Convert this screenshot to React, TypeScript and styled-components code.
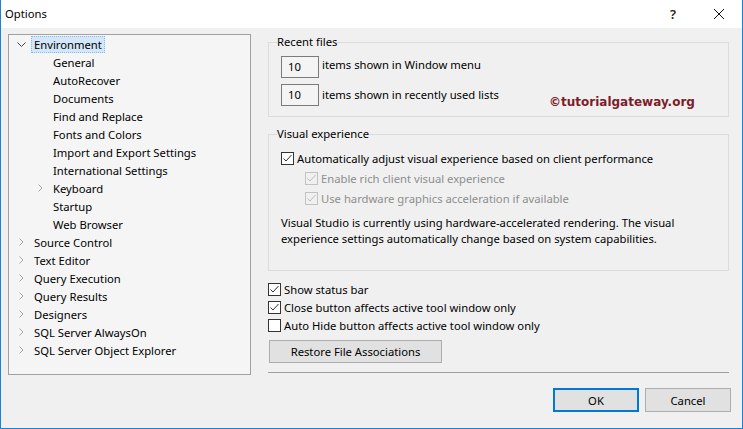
import React from 'react';
import styled, { createGlobalStyle, css } from 'styled-components';

const GlobalStyle = createGlobalStyle`
  html, body { margin: 0; padding: 0; background: #f0f0f0; }
  body {
    font-family: "Noto Sans", "Open Sans", sans-serif;
    font-size: 11.25px;
    color: #000;
  }
  * { box-sizing: border-box; }
`;

const Window = styled.div`
  width: 743px;
  height: 429px;
  border: 1px solid #1883d7;
  border-top: none;
  background: #f0f0f0;
  display: flex;
  flex-direction: column;
  overflow: hidden;
`;

const TitleBar = styled.div`
  height: 28px;
  flex: none;
  background: #fff;
  display: flex;
  align-items: center;
  padding-left: 4px;
`;

const Title = styled.div`
  flex: 1;
  line-height: 16px;
`;

const CaptionButton = styled.div`
  width: 46px;
  height: 28px;
  display: flex;
  align-items: center;
  justify-content: center;
  font-size: 13px;
  font-weight: 600;
  color: #222;
`;

const Main = styled.div`
  flex: 1;
  display: flex;
  gap: 17px;
  padding: 6px 13px 0 7px;
`;

const Tree = styled.div`
  width: 243px;
  height: 341px;
  flex: none;
  border: 1px solid #a0a0a0;
  background: #f5f5f5;
`;

const TreeRow = styled.div<{ $level: number }>`
  height: 18px;
  display: flex;
  align-items: center;
  padding-left: ${p => 6 + p.$level * 19}px;
  white-space: nowrap;
`;

const ChevronSlot = styled.span`
  width: 12px;
  height: 18px;
  flex: none;
  display: flex;
  align-items: center;
  justify-content: center;
`;

const TreeLabel = styled.span<{ $selected?: boolean }>`
  margin-left: 4px;
  padding: 0 2px;
  height: 17px;
  line-height: 15px;
  border: 1px solid transparent;
  ${p =>
    p.$selected &&
    css`
      background: #d3e7f8;
      border: 1px dotted #86b9ea;
    `}
`;

const Column = styled.div`
  width: 461px;
  flex: none;
  display: flex;
  flex-direction: column;
`;

const Group = styled.fieldset<{ $pt: number; $pb: number; $mt?: number }>`
  margin: ${p => p.$mt ?? 0}px 0 0 0;
  min-width: 0;
  border: 1px solid #dcdcdc;
  padding: ${p => p.$pt}px 8px ${p => p.$pb}px 12px;
`;

const Legend = styled.legend`
  padding: 0;
  margin-left: -4px;
  line-height: 16px;
`;

const FieldRows = styled.div`
  display: flex;
  flex-direction: column;
  gap: 6px;
`;

const FieldRow = styled.div`
  position: relative;
  height: 22px;
  display: flex;
  align-items: center;
  gap: 3px;
`;

const FieldLabel = styled.span<{ $shift?: number }>`
  line-height: 16px;
  margin-top: ${p => p.$shift ?? 0}px;
`;

const NumberBox = styled.div`
  width: 38px;
  height: 22px;
  border: 1px solid #7f7a7a;
  background: #f4f4f4;
  padding-left: 6px;
  line-height: 20px;
`;

const Watermark = styled.div`
  position: absolute;
  left: 268px;
  top: 10px;
  font-family: "DejaVu Sans", Verdana, sans-serif;
  font-weight: bold;
  font-size: 12px;
  line-height: 16px;
  color: #7e1c2a;
  white-space: nowrap;
`;

const CheckRow = styled.label<{ $h: number; $indent?: number; $disabled?: boolean }>`
  height: ${p => p.$h}px;
  display: flex;
  align-items: center;
  gap: 3px;
  padding-left: ${p => p.$indent ?? 0}px;
  white-space: nowrap;
  color: ${p => (p.$disabled ? '#8e8e8e' : '#000')};
`;

const Box = styled.span<{ $disabled?: boolean }>`
  width: 13px;
  height: 13px;
  flex: none;
  border: 1px solid ${p => (p.$disabled ? '#c2c2c2' : '#333')};
  background: ${p => (p.$disabled ? '#f0f0f0' : '#fff')};
  display: flex;
  align-items: center;
  justify-content: center;
`;

const Paragraph = styled.p`
  margin: 7px 0 0 0;
  line-height: 16px;
  width: 440px;
`;

const BottomChecks = styled.div`
  margin-top: 9px;
  display: flex;
  flex-direction: column;
`;

const Button = styled.button<{ $w: number; $h: number; $default?: boolean }>`
  width: ${p => p.$w}px;
  height: ${p => p.$h}px;
  background: #e1e1e1;
  border: ${p => (p.$default ? '2px solid #0078d7' : '1px solid #adadad')};
  font-family: inherit;
  font-size: 11.25px;
  color: #000;
  padding: 0;
`;

const RestoreButton = styled(Button)`
  margin: 6px 0 0 1px;
`;

const Separator = styled.div`
  margin-top: 9px;
  height: 1px;
  background: #a29e9e;
`;

const ButtonRow = styled.div`
  margin: 15px -2px 0 0;
  display: flex;
  justify-content: flex-end;
  gap: 6px;
`;

const ExpandedChevron = () => (
  <svg width="9" height="5" viewBox="0 0 9 5">
    <path d="M0.5 0.5 L4.5 4.5 L8.5 0.5" fill="none" stroke="#444" strokeWidth="1" />
  </svg>
);

const CollapsedChevron = () => (
  <svg width="5" height="8" viewBox="0 0 5 8">
    <path d="M0.5 0.5 L4 4 L0.5 7.5" fill="none" stroke="#a6a6a6" strokeWidth="1" />
  </svg>
);

const Check = ({ color }: { color: string }) => (
  <svg width="11" height="11" viewBox="0 0 11 11">
    <path d="M1.5 5.5 L4 8 L9.5 2" fill="none" stroke={color} strokeWidth="1" />
  </svg>
);

const CheckBox = ({ checked, disabled }: { checked: boolean; disabled?: boolean }) => (
  <Box $disabled={disabled}>{checked && <Check color={disabled ? '#bdbdbd' : '#333'} />}</Box>
);

type Node = { label: string; level: number; chevron?: 'open' | 'closed'; selected?: boolean };

const nodes: Node[] = [
  { label: 'Environment', level: 0, chevron: 'open', selected: true },
  { label: 'General', level: 1 },
  { label: 'AutoRecover', level: 1 },
  { label: 'Documents', level: 1 },
  { label: 'Find and Replace', level: 1 },
  { label: 'Fonts and Colors', level: 1 },
  { label: 'Import and Export Settings', level: 1 },
  { label: 'International Settings', level: 1 },
  { label: 'Keyboard', level: 1, chevron: 'closed' },
  { label: 'Startup', level: 1 },
  { label: 'Web Browser', level: 1 },
  { label: 'Source Control', level: 0, chevron: 'closed' },
  { label: 'Text Editor', level: 0, chevron: 'closed' },
  { label: 'Query Execution', level: 0, chevron: 'closed' },
  { label: 'Query Results', level: 0, chevron: 'closed' },
  { label: 'Designers', level: 0, chevron: 'closed' },
  { label: 'SQL Server AlwaysOn', level: 0, chevron: 'closed' },
  { label: 'SQL Server Object Explorer', level: 0, chevron: 'closed' },
];

export default function App() {
  return (
    <>
      <GlobalStyle />
      <Window>
        <TitleBar>
          <Title>Options</Title>
          <CaptionButton>?</CaptionButton>
          <CaptionButton>
            <svg width="10" height="10" viewBox="0 0 10 10">
              <path d="M0 0 L10 10 M10 0 L0 10" stroke="#111" strokeWidth="1" />
            </svg>
          </CaptionButton>
        </TitleBar>
        <Main>
          <Tree>
            {nodes.map(n => (
              <TreeRow key={n.label} $level={n.level}>
                <ChevronSlot>
                  {n.chevron === 'open' && <ExpandedChevron />}
                  {n.chevron === 'closed' && <CollapsedChevron />}
                </ChevronSlot>
                <TreeLabel $selected={n.selected}>{n.label}</TreeLabel>
              </TreeRow>
            ))}
          </Tree>
          <Column>
            <Group $pt={6} $pb={10}>
              <Legend>Recent files</Legend>
              <FieldRows>
                <FieldRow>
                  <NumberBox>10</NumberBox>
                  <FieldLabel $shift={-4}>items shown in Window menu</FieldLabel>
                </FieldRow>
                <FieldRow>
                  <NumberBox>10</NumberBox>
                  <FieldLabel $shift={-1}>items shown in recently used lists</FieldLabel>
                  <Watermark>©tutorialgateway.org</Watermark>
                </FieldRow>
              </FieldRows>
            </Group>
            <Group $pt={6} $pb={23} $mt={9}>
              <Legend>Visual experience</Legend>
              <CheckRow $h={20}>
                <CheckBox checked />
                Automatically adjust visual experience based on client performance
              </CheckRow>
              <CheckRow $h={20} $indent={24} $disabled>
                <CheckBox checked disabled />
                Enable rich client visual experience
              </CheckRow>
              <CheckRow $h={20} $indent={24} $disabled>
                <CheckBox checked disabled />
                Use hardware graphics acceleration if available
              </CheckRow>
              <Paragraph>
                Visual Studio is currently using hardware-accelerated rendering. The visual experience
                settings automatically change based on system capabilities.
              </Paragraph>
            </Group>
            <BottomChecks>
              <CheckRow $h={18}>
                <CheckBox checked />
                Show status bar
              </CheckRow>
              <CheckRow $h={18}>
                <CheckBox checked />
                Close button affects active tool window only
              </CheckRow>
              <CheckRow $h={18}>
                <CheckBox checked={false} />
                Auto Hide button affects active tool window only
              </CheckRow>
            </BottomChecks>
            <div>
              <RestoreButton $w={173} $h={23}>Restore File Associations</RestoreButton>
            </div>
            <Separator />
            <ButtonRow>
              <Button $w={86} $h={24} $default>OK</Button>
              <Button $w={86} $h={24}>Cancel</Button>
            </ButtonRow>
          </Column>
        </Main>
      </Window>
    </>
  );
}
